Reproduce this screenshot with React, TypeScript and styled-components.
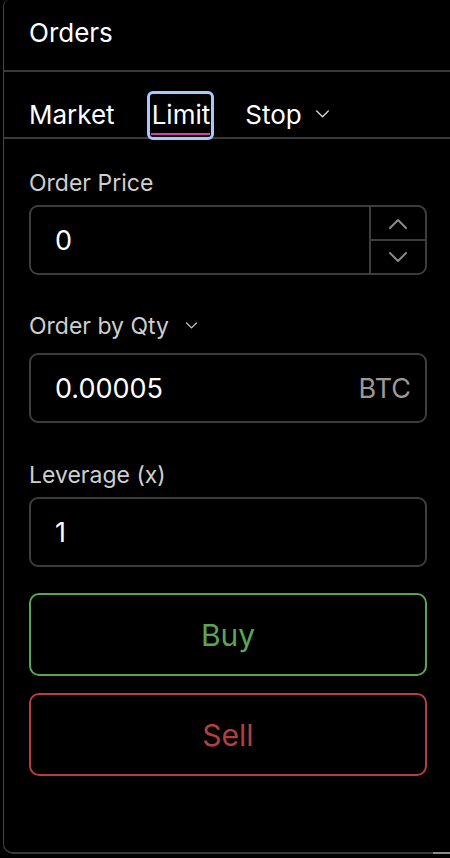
import React from "react";
import styled, { createGlobalStyle } from "styled-components";

const Global = createGlobalStyle`
  html, body { margin: 0; padding: 0; background: #000; }
  body { font-family: Inter, "Noto Sans", "Liberation Sans", sans-serif; color: #fff; }
  * { box-sizing: border-box; }
`;

const Page = styled.div`
  width: 450px;
  height: 858px;
  padding: 0 0 4px 3px;
  background: #000;
  overflow: hidden;
`;

const Panel = styled.section`
  height: 100%;
  border-left: 1px solid #444;
  border-bottom: 2px solid #3a3a3a;
  border-bottom-left-radius: 10px;
  border-top-left-radius: 6px;
  display: flex;
  flex-direction: column;
  position: relative;
`;

const Header = styled.header`
  height: 72px;
  flex-shrink: 0;
  padding: 17px 0 0 25px;
  font-size: 26px;
  line-height: 32px;
  font-weight: 400;
  border-bottom: 2px solid #3a3a3a;
`;

const Tabs = styled.nav`
  height: 67px;
  flex-shrink: 0;
  display: flex;
  align-items: flex-end;
  gap: 35px;
  padding: 0 0 0 25px;
  border-bottom: 2px solid #3a3a3a;
`;

const Tab = styled.button<{ $active?: boolean }>`
  background: none;
  border: none;
  color: #fff;
  font-family: inherit;
  font-size: 26px;
  line-height: 31px;
  font-weight: 400;
  padding: 0 0 7px;
  display: flex;
  align-items: center;
  gap: 14px;
  position: relative;
  cursor: pointer;
  ${(p) =>
    p.$active &&
    `
    margin-left: 2px;
    &::before {
      content: "";
      position: absolute;
      left: -5px; right: -4px; top: -8px; bottom: -3px;
      border: 3px solid #a6c8ff;
      border-radius: 6px;
    }
    &::after {
      content: "";
      position: absolute;
      left: -1px; right: 0; bottom: 2px;
      height: 2px;
      background: #d4409f;
    }
  `}
`;

const Form = styled.div`
  padding: 31px 23px 0 25px;
  display: flex;
  flex-direction: column;
`;

const Label = styled.div<{ $top?: number; $bottom?: number }>`
  font-size: 23px;
  line-height: 26px;
  color: #cfcfcf;
  display: flex;
  align-items: center;
  gap: 17px;
  margin-top: ${(p) => p.$top ?? 0}px;
  margin-bottom: ${(p) => p.$bottom ?? 9}px;
`;

const Field = styled.div`
  height: 70px;
  border: 2px solid #3d3d3d;
  border-radius: 9px;
  display: flex;
  align-items: stretch;
`;

const Value = styled.div`
  flex: 1;
  display: flex;
  align-items: center;
  padding-left: 24px;
  font-size: 27px;
  color: #fff;
`;

const Unit = styled.div`
  display: flex;
  align-items: center;
  padding-right: 14px;
  font-size: 27px;
  color: #9a9a9a;
`;

const Stepper = styled.div`
  width: 56px;
  border-left: 2px solid #3d3d3d;
  display: flex;
  flex-direction: column;
`;

const Step = styled.div<{ $top?: boolean }>`
  flex: 1;
  display: flex;
  align-items: center;
  justify-content: center;
  ${(p) => (p.$top ? "border-bottom: 2px solid #3d3d3d;" : "")}
`;

const Actions = styled.div`
  margin-top: 26px;
  display: flex;
  flex-direction: column;
  gap: 17px;
`;

const ActionButton = styled.button<{ $color: string }>`
  height: 83px;
  border: 2px solid ${(p) => p.$color};
  border-radius: 10px;
  background: transparent;
  color: ${(p) => p.$color};
  font-family: inherit;
  font-size: 30px;
  display: flex;
  align-items: center;
  justify-content: center;
`;

const Handle = styled.div`
  position: absolute;
  right: 0;
  bottom: -2px;
  width: 17px;
  height: 2px;
  background: #8a8a8a;
`;

const Chevron = ({ up, size = 18, color = "#8a8a8a" }: { up?: boolean; size?: number; color?: string }) => (
  <svg width={size} height={size / 2 + 2} viewBox="0 0 18 11" fill="none">
    <path
      d={up ? "M1 10 L9 2 L17 10" : "M1 1 L9 9 L17 1"}
      stroke={color}
      strokeWidth="2"
      strokeLinecap="round"
      strokeLinejoin="round"
    />
  </svg>
);

export default function App() {
  return (
    <Page>
      <Global />
      <Panel>
        <Header>Orders</Header>
        <Tabs>
          <Tab>Market</Tab>
          <Tab $active>Limit</Tab>
          <Tab>
            Stop <Chevron size={13} color="#d0d0d0" />
          </Tab>
        </Tabs>
        <Form>
          <Label>Order Price</Label>
          <Field>
            <Value>0</Value>
            <Stepper>
              <Step $top>
                <Chevron up />
              </Step>
              <Step>
                <Chevron />
              </Step>
            </Stepper>
          </Field>
          <Label $top={38} $bottom={14}>
            Order by Qty <Chevron size={11} color="#c8c8c8" />
          </Label>
          <Field>
            <Value>0.00005</Value>
            <Unit>BTC</Unit>
          </Field>
          <Label $top={39}>Leverage (x)</Label>
          <Field>
            <Value>1</Value>
          </Field>
          <Actions>
            <ActionButton $color="#5aa555">Buy</ActionButton>
            <ActionButton $color="#b3403f">Sell</ActionButton>
          </Actions>
        </Form>
        <Handle />
      </Panel>
    </Page>
  );
}
